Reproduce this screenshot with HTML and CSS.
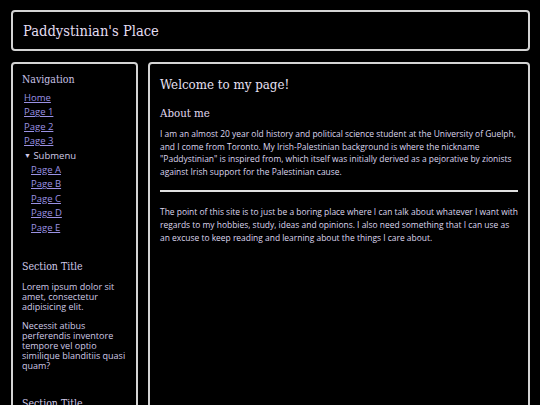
FILE: index.html
```html
<!DOCTYPE html>
<html>
<head>
<meta charset="utf-8">
<link rel="stylesheet" href="styles.css">
</head>
<body>
<header class="site-header">
  <h1 class="site-title">Paddystinian's Place</h1>
</header>
<div class="layout">
  <aside class="sidebar">
    <h2 class="side-heading">Navigation</h2>
    <ul class="nav">
      <li><a href="#">Home</a></li>
      <li><a href="#">Page 1</a></li>
      <li><a href="#">Page 2</a></li>
      <li><a href="#">Page 3</a></li>
      <li class="submenu"><span class="sub-label"><span class="tri">&#9660;</span> Submenu</span>
        <ul class="subnav">
          <li><a href="#">Page A</a></li>
          <li><a href="#">Page B</a></li>
          <li><a href="#">Page C</a></li>
          <li><a href="#">Page D</a></li>
          <li><a href="#">Page E</a></li>
        </ul>
      </li>
    </ul>
    <h2 class="side-heading section">Section Title</h2>
    <p class="side-text">Lorem ipsum dolor sit amet, consectetur adipisicing elit.</p>
    <p class="side-text">Necessit atibus perferendis inventore tempore vel optio similique blanditiis quasi quam?</p>
    <h2 class="side-heading section">Section Title</h2>
  </aside>
  <main class="main">
    <h1 class="main-title">Welcome to my page!</h1>
    <h2 class="main-sub">About me</h2>
    <p class="main-text">I am an almost 20 year old history and political science student at the University of Guelph, and I come from Toronto. My Irish-Palestinian background is where the nickname "Paddystinian" is inspired from, which itself was initially derived as a pejorative by zionists against Irish support for the Palestinian cause.</p>
    <hr class="rule">
    <p class="main-text">The point of this site is to just be a boring place where I can talk about whatever I want with regards to my hobbies, study, ideas and opinions. I also need something that I can use as an excuse to keep reading and learning about the things I care about.</p>
  </main>
</div>
</body>
</html>
```
FILE: styles.css
```css
html, body {
  margin: 0;
  padding: 0;
  background: #000;
  height: 100%;
  overflow: hidden;
}
body {
  padding: 10px 10px 0 10px;
  box-sizing: border-box;
  color: #ddd6ee;
  font-family: "Open Sans", sans-serif;
}
.site-header {
  border: 2px solid #d4d4d4;
  border-radius: 4px;
  height: 41px;
  box-sizing: border-box;
  display: flex;
  align-items: center;
  padding: 0 10px;
  margin: 0 0 11px 1px;
}
.site-title,
.side-heading,
.main-title,
.main-sub {
  font-family: "DejaVu Serif", serif;
  font-stretch: condensed;
  font-weight: normal;
  margin: 0;
}
.site-title {
  font-size: 14.6px;
  color: #e4def2;
}
.layout {
  display: flex;
  gap: 10px;
  margin-left: 1px;
  height: 400px;
}
.sidebar {
  width: 127px;
  box-sizing: border-box;
  border: 2px solid #d4d4d4;
  border-radius: 4px;
  padding: 9px 9px;
  flex: none;
}
.side-heading {
  font-size: 10.5px;
  line-height: 13px;
  color: #c9c2e6;
}
.side-heading.section {
  margin-top: 25px;
  color: #cfc9e8;
}
.nav, .subnav {
  list-style: none;
  margin: 0;
  padding: 0;
}
.nav {
  margin-top: 5px;
  padding-left: 2px;
}
.nav li {
  font-size: 9.5px;
  line-height: 14.4px;
}
.subnav {
  padding-left: 7px;
}
.nav a {
  color: #9b92e4;
}
.sub-label {
  color: #cfc9e6;
}
.tri {
  font-size: 7px;
  vertical-align: 1px;
}
.side-text {
  font-size: 9px;
  line-height: 10.2px;
  margin: 8px 0 0 0;
  color: #cfc9e6;
}
.side-heading.section + .side-text {
  margin-top: 9px;
}
.main {
  flex: 1;
  border: 2px solid #d4d4d4;
  border-radius: 4px;
  padding: 12px 10px;
  box-sizing: border-box;
}
.main-title {
  font-size: 13.2px;
  line-height: 17px;
  color: #e8e2f4;
}
.main-sub {
  margin-top: 13px;
  font-size: 11.4px;
  line-height: 14px;
  color: #e0daf0;
}
.main-text {
  font-size: 8.45px;
  line-height: 12.6px;
  margin: 8px 0 0 0;
  color: #ddd6ee;
}
.rule {
  border: none;
  border-top: 2px solid #e0e0e0;
  margin: 12px 0 0 0;
}
.rule + .main-text {
  margin-top: 14px;
}
```
